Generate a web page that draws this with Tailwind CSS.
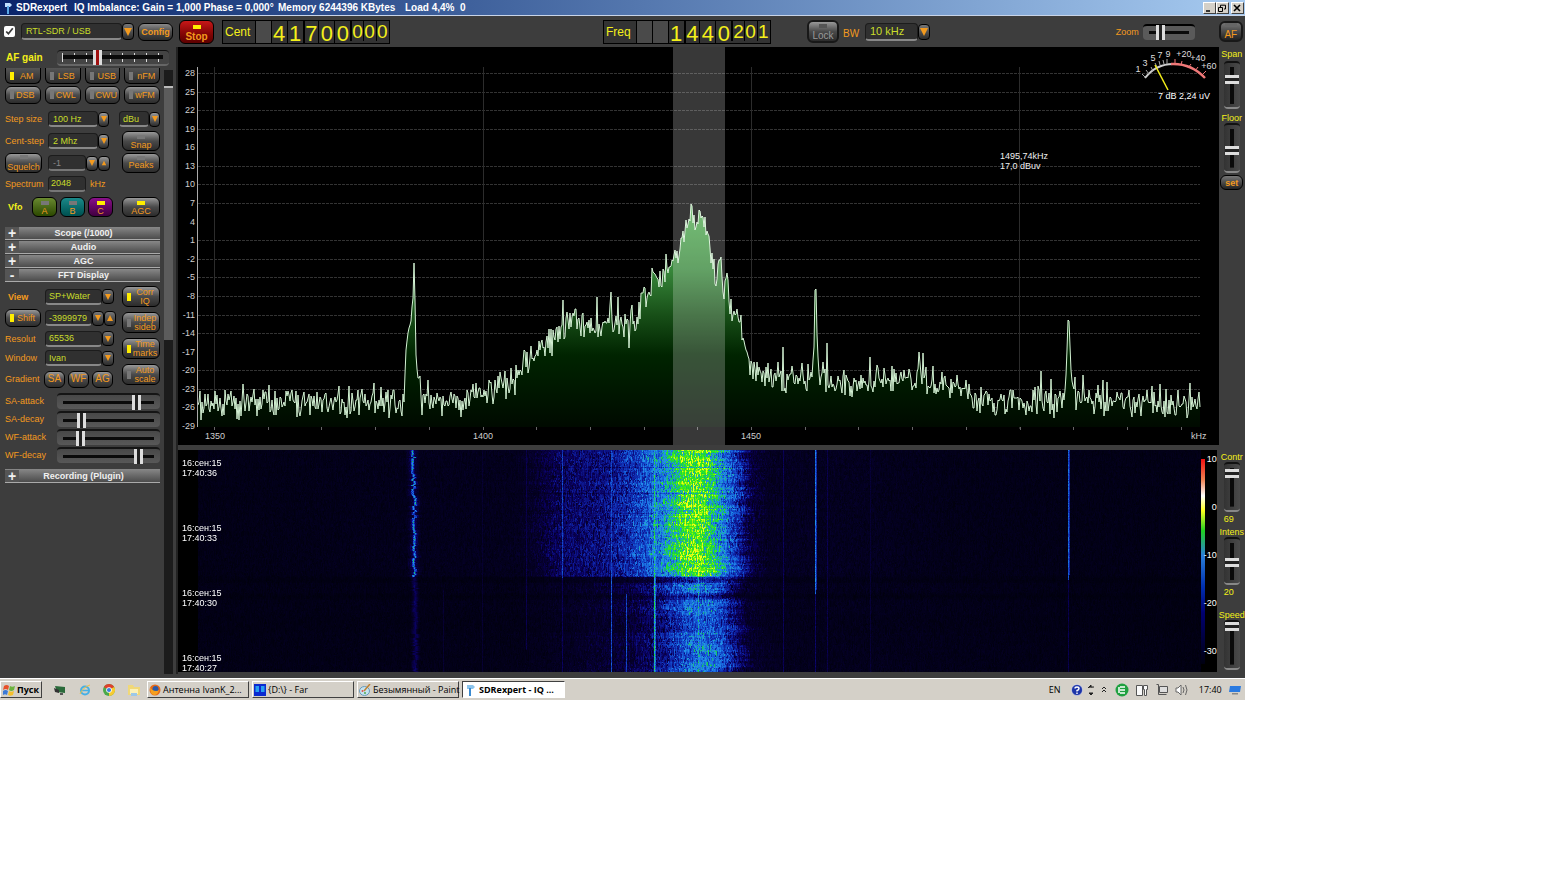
<!DOCTYPE html>
<html lang="en">
<head>
  <meta charset="UTF-8" />
  <meta name="viewport" content="width=device-width, initial-scale=1.0"/>
  <title>SDRexpert</title>
  <script src="https://cdn.jsdelivr.net/npm/@tailwindcss/browser@4"></script>
</head>
<body class="bg-white">
  <div class="w-4/5 overflow-hidden bg-[#3d3d3d] font-['Liberation_Sans',Arial,sans-serif] text-[9px] leading-[10px] text-[#f39a1e]">

    <!-- Title bar -->
    <header class="flex h-4 items-center whitespace-nowrap border-b border-[#c8d4e8] bg-linear-to-r from-[#0a246a] to-[#a6caf0] pl-1 pr-px text-[10px] font-bold text-white">
      <svg class="mr-1 h-3 w-2" viewBox="0 0 8 12"><path d="M1 1h5l2 2-2 2H1z" fill="#bfe0ff"/><path d="M3 4h2v8H3z" fill="#5aa9e6"/></svg>
      <span class="w-[58px]">SDRexpert</span>
      <span class="w-[204px]">IQ Imbalance: Gain = 1,000 Phase = 0,000°</span>
      <span class="w-[127px]">Memory 6244396 KBytes</span>
      <span>Load 4,4%&nbsp; 0</span>
      <div class="ml-auto flex h-3">
        <button aria-label="Minimize" class="flex w-[13px] items-center justify-center border border-[#404040] border-l-white border-t-white bg-[#d4d0c8]"><svg class="size-2" viewBox="0 0 8 8"><path d="M1 7h4" stroke="#000" stroke-width="1.5"/></svg></button>
        <button aria-label="Restore" class="flex w-[13px] items-center justify-center border border-[#404040] border-l-white border-t-white bg-[#d4d0c8]"><svg class="size-2" viewBox="0 0 8 8" fill="none" stroke="#000"><path d="M2.5 3V1.2h5V5H6M.5 3.5h4v4h-4z"/></svg></button>
        <button aria-label="Close" class="ml-0.5 flex w-[13px] items-center justify-center border border-[#404040] border-l-white border-t-white bg-[#d4d0c8]"><svg class="size-2" viewBox="0 0 8 8"><path d="M1 1l6 6M7 1L1 7" stroke="#000" stroke-width="1.6"/></svg></button>
      </div>
    </header>

    <!-- Toolbar -->
    <div class="flex h-[31px] items-center">
      <div class="flex w-[179px] items-center">
        <input type="checkbox" checked aria-label="Device on" class="ml-1 size-[11px] accent-white"/>
        <select aria-label="Device" class="ml-1.5 h-[17px] w-[101px] appearance-none rounded-sm border border-b-2 border-[#1c1c1c] border-b-[#888] bg-[#303030] pl-1 leading-3 text-[#c9dd2a]"><option>RTL-SDR / USB</option></select>
        <span class="flex h-[17px] w-3 items-center justify-center rounded-sm border border-black bg-linear-to-b from-[#777] to-[#2c2c2c]"><svg class="size-2" viewBox="0 0 8 8"><path d="M0 0h8L4 8z" fill="#f39a1e"/></svg></span>
        <button class="ml-1 h-[18px] w-[35px] rounded-md border border-black bg-linear-to-b from-[#8a8a8a] via-[#4a4a4a] to-[#2c2c2c] font-bold">Config</button>
      </div>
      <button class="flex h-6 w-[35px] flex-col items-center justify-between rounded-md border border-black bg-linear-to-b from-[#c81818] via-[#8c0808] to-[#5c0000] pt-1 pb-px text-[10px] font-bold"><span class="h-1 w-2 bg-[#ffee00]"></span>Stop</button>

      <!-- Centre frequency -->
      <div class="ml-2 flex h-[24px] w-[168px] border border-black bg-[#333] text-[22px] leading-[25px] text-[#f4f01a]">
        <span class="w-8 pl-0.5 text-xs leading-[22px]">Cent</span>
        <span class="w-4 border-l border-black bg-[#4a4a4a]"></span>
        <span class="w-4 border-l border-black text-center">4</span>
        <span class="w-4 border-l border-black text-center">1</span>
        <span class="w-4 border-l-2 border-black text-center">7</span>
        <span class="w-4 border-l border-black text-center">0</span>
        <span class="w-4 border-l border-black text-center">0</span>
        <span class="h-5 w-[13px] border-l-2 border-black text-[19px] leading-[22px]">0</span>
        <span class="h-5 w-[13px] border-l border-black text-[19px] leading-[22px]">0</span>
        <span class="h-5 w-[13px] border-l border-black text-[19px] leading-[22px]">0</span>
      </div>

      <!-- Tuned frequency -->
      <div class="ml-[213px] flex h-[24px] w-[168px] border border-black bg-[#333] text-[22px] leading-[25px] text-[#f4f01a]">
        <span class="w-8 pl-0.5 text-xs leading-[22px]">Freq</span>
        <span class="w-4 border-l border-black bg-[#4a4a4a]"></span>
        <span class="w-4 border-l border-black bg-[#4a4a4a]"></span>
        <span class="w-4 border-l border-black text-center">1</span>
        <span class="w-4 border-l-2 border-black text-center">4</span>
        <span class="w-4 border-l border-black text-center">4</span>
        <span class="w-4 border-l border-black text-center">0</span>
        <span class="h-5 w-[13px] border-l-2 border-black text-[19px] leading-[22px]">2</span>
        <span class="h-5 w-[13px] border-l border-black text-[19px] leading-[22px]">0</span>
        <span class="h-5 w-[13px] border-l border-black text-[19px] leading-[22px]">1</span>
      </div>

      <button class="ml-9 flex h-[23px] w-8 flex-col items-center justify-between rounded-md border-2 border-[#181818] bg-linear-to-b from-[#999] via-[#4a4a4a] to-[#2c2c2c] pt-0.5 text-[10px] text-[#999]"><span class="h-1 w-2 bg-[#555]"></span>Lock</button>
      <label for="bw" class="ml-1 w-[22px] pt-1 text-[10px]">BW</label>
      <select id="bw" class="h-[18px] w-[53px] appearance-none rounded-sm border border-b-2 border-[#1c1c1c] border-b-[#888] bg-[#303030] pl-1 text-[11px] leading-3 text-[#c9dd2a]"><option>10 kHz</option></select>
      <span class="flex h-4 w-3 items-center justify-center rounded-sm border border-black bg-linear-to-b from-[#777] to-[#2c2c2c]"><svg class="size-2" viewBox="0 0 8 8"><path d="M0 0h8L4 8z" fill="#f39a1e"/></svg></span>

      <label for="zoom" class="ml-auto">Zoom</label>
      <input id="zoom" type="range" value="26" class="ml-1 h-4 w-[52px] appearance-none rounded-sm border-t-2 border-black bg-[linear-gradient(#0a0a0a,#0a0a0a),linear-gradient(#5a5a5a,#5a5a5a)] bg-[length:40px_3px,100%_100%] bg-center bg-no-repeat px-1 [&::-webkit-slider-thumb]:h-[15px] [&::-webkit-slider-thumb]:w-[9px] [&::-webkit-slider-thumb]:appearance-none [&::-webkit-slider-thumb]:bg-[linear-gradient(to_right,#ddd_3px,#222_3px,#222_6px,#ddd_6px)]"/>
      <button class="ml-6 mr-0.5 flex h-[21px] w-6 flex-col items-center justify-between rounded-md border-2 border-[#181818] bg-linear-to-b from-[#777] via-[#4a4a4a] to-[#222] text-[10px]"><span class="h-1 w-3 bg-[#666]"></span>AF</button>
    </div>

    <div class="flex pb-1">
      <!-- Left controls -->
      <aside class="flex w-[178px] shrink-0 flex-col border-r-2 border-[#222]">
        <div class="flex h-[21px] items-center">
          <label for="afgain" class="w-[57px] pl-1.5 text-[10px] font-bold text-[#f4f01a]">AF gain</label>
          <input id="afgain" type="range" value="34" class="h-4 w-[112px] appearance-none rounded-sm border-t border-b-2 border-[#111] border-b-[#666] bg-[linear-gradient(#0a0a0a,#0a0a0a),repeating-linear-gradient(to_right,#ddd_0,#ddd_1px,transparent_1px,transparent_12px),linear-gradient(#444,#444)] bg-[length:100px_4px,102px_9px,100%_100%] bg-center bg-no-repeat px-1 [&::-webkit-slider-thumb]:h-[15px] [&::-webkit-slider-thumb]:w-[9px] [&::-webkit-slider-thumb]:appearance-none [&::-webkit-slider-thumb]:bg-[linear-gradient(to_right,#ddd_3px,#a01010_3px,#a01010_6px,#ddd_6px)]"/>
        </div>

        <div class="flex">
          <div class="flex w-[164px] flex-col pl-[5px] pr-1">
            <!-- Demodulator modes -->
            <div class="grid grid-cols-4 gap-x-1 gap-y-0.5">
              <button class="flex h-4 items-center gap-1.5 rounded-b-md border border-t-0 border-black bg-linear-to-b from-[#555] to-[#2c2c2c] pl-1"><span class="h-2 w-1 bg-[#ffee00]"></span>AM</button>
              <button class="flex h-4 items-center gap-1 rounded-b-md border border-t-0 border-black bg-linear-to-b from-[#555] to-[#2c2c2c] pl-1"><span class="h-2 w-1 bg-[#777]"></span>LSB</button>
              <button class="flex h-4 items-center gap-1 rounded-b-md border border-t-0 border-black bg-linear-to-b from-[#555] to-[#2c2c2c] pl-1"><span class="h-2 w-1 bg-[#777]"></span>USB</button>
              <button class="flex h-4 items-center gap-1 rounded-b-md border border-t-0 border-black bg-linear-to-b from-[#555] to-[#2c2c2c] pl-1"><span class="h-2 w-1 bg-[#777]"></span>nFM</button>
              <button class="flex h-[18px] items-center gap-0.5 rounded-md border border-black bg-linear-to-b from-[#999] via-[#4a4a4a] to-[#2c2c2c] pl-1"><span class="h-2 w-1 bg-[#777]"></span>DSB</button>
              <button class="flex h-[18px] items-center gap-0.5 rounded-md border border-black bg-linear-to-b from-[#999] via-[#4a4a4a] to-[#2c2c2c] pl-1"><span class="h-2 w-1 bg-[#777]"></span>CWL</button>
              <button class="flex h-[18px] items-center gap-0.5 rounded-md border border-black bg-linear-to-b from-[#999] via-[#4a4a4a] to-[#2c2c2c] pl-1"><span class="h-2 w-1 bg-[#777]"></span>CWU</button>
              <button class="flex h-[18px] items-center gap-0.5 rounded-md border border-black bg-linear-to-b from-[#999] via-[#4a4a4a] to-[#2c2c2c] pl-1"><span class="h-2 w-1 bg-[#777]"></span>wFM</button>
            </div>

            <div class="mt-1 flex h-[22px] items-center">
              <label for="step" class="w-[43px]">Step size</label>
              <select id="step" class="h-4 w-[50px] appearance-none rounded-sm border border-b-2 border-[#1c1c1c] border-b-[#888] bg-[#303030] pl-1 leading-3 text-[#c9dd2a]"><option>100 Hz</option></select>
              <span class="flex h-[15px] w-[11px] items-center justify-center rounded-sm border border-black bg-linear-to-b from-[#999] to-[#2c2c2c]"><svg class="size-1.5" viewBox="0 0 8 8"><path d="M0 0h8L4 8z" fill="#f39a1e"/></svg></span>
              <select aria-label="Units" class="ml-auto h-4 w-[30px] appearance-none rounded-sm border border-b-2 border-[#1c1c1c] border-b-[#888] bg-[#303030] pl-[3px] leading-3 text-[#c9dd2a]"><option>dBu</option></select>
              <span class="flex h-[15px] w-[11px] items-center justify-center rounded-sm border border-black bg-linear-to-b from-[#999] to-[#2c2c2c]"><svg class="size-1.5" viewBox="0 0 8 8"><path d="M0 0h8L4 8z" fill="#f39a1e"/></svg></span>
            </div>
            <div class="flex h-[22px] items-center">
              <label for="centstep" class="w-[43px]">Cent-step</label>
              <select id="centstep" class="h-4 w-[50px] appearance-none rounded-sm border border-b-2 border-[#1c1c1c] border-b-[#888] bg-[#303030] pl-1 leading-3 text-[#c9dd2a]"><option>2 Mhz</option></select>
              <span class="flex h-[15px] w-[11px] items-center justify-center rounded-sm border border-black bg-linear-to-b from-[#999] to-[#2c2c2c]"><svg class="size-1.5" viewBox="0 0 8 8"><path d="M0 0h8L4 8z" fill="#f39a1e"/></svg></span>
              <button class="ml-auto flex h-5 w-[38px] flex-col items-center justify-between rounded-md border border-black bg-linear-to-b from-[#999] via-[#4a4a4a] to-[#2c2c2c] pt-[3px]"><span class="h-1 w-2 shrink-0 bg-[#777]"></span>Snap</button>
            </div>
            <div class="flex h-[22px] items-center">
              <button class="mr-1.5 flex h-5 w-[37px] flex-col items-center justify-between rounded-md border border-black bg-linear-to-b from-[#999] via-[#4a4a4a] to-[#2c2c2c] pt-px"><span class="h-1 w-2 shrink-0 bg-[#777]"></span>Squelch</button>
              <input type="text" value="-1" aria-label="Squelch level" class="h-4 w-[38px] rounded-sm border border-b-2 border-[#1c1c1c] border-b-[#777] bg-[#303030] pl-1 text-[#888]"/>
              <button aria-label="Squelch down" class="flex h-[15px] w-3 items-center justify-center rounded-sm border border-black bg-linear-to-b from-[#999] to-[#2c2c2c]"><svg class="size-1.5" viewBox="0 0 8 8"><path d="M0 0h8L4 8z" fill="#f39a1e"/></svg></button>
              <button aria-label="Squelch up" class="flex h-[15px] w-3 items-center justify-center rounded-sm border border-black bg-linear-to-b from-[#999] to-[#2c2c2c]"><svg class="size-1.5" viewBox="0 0 8 8"><path d="M1 7h6L4 1z" fill="#f39a1e"/></svg></button>
              <button class="ml-auto flex h-5 w-[38px] flex-col items-center justify-between rounded-md border border-black bg-linear-to-b from-[#999] via-[#4a4a4a] to-[#2c2c2c] pt-0.5 pb-0.5"><span class="h-1 w-2 shrink-0 bg-[#777]"></span>Peaks</button>
            </div>
            <div class="flex h-[19px] items-center">
              <label for="spectrumw" class="w-[43px]">Spectrum</label>
              <input id="spectrumw" type="text" value="2048" class="h-4 w-[38px] rounded-sm border border-b-2 border-[#1c1c1c] border-b-[#777] bg-[#303030] pl-0.5 text-[#c9dd2a]"/>
              <span class="ml-1">kHz</span>
            </div>
            <div class="flex h-7 items-center font-bold">
              <span class="w-[27px] pl-[3px] text-[#f4f01a]">Vfo</span>
              <button class="flex h-5 w-[25px] flex-col items-center justify-between rounded-md border border-black bg-linear-to-b from-[#6a8a30] to-[#2c4800] pt-[3px] font-normal"><span class="h-1 w-2 shrink-0 bg-[#777]"></span>A</button>
              <button class="ml-[3px] flex h-5 w-[25px] flex-col items-center justify-between rounded-md border border-black bg-linear-to-b from-[#1a8a8a] to-[#005050] pt-[3px] font-normal"><span class="h-1 w-2 shrink-0 bg-[#777]"></span>B</button>
              <button class="ml-[3px] flex h-5 w-[25px] flex-col items-center justify-between rounded-md border border-black bg-linear-to-b from-[#8a108a] to-[#400040] pt-[3px] font-normal"><span class="h-1 w-2 shrink-0 bg-[#ffee00]"></span>C</button>
              <button class="ml-auto flex h-5 w-[38px] flex-col items-center justify-between rounded-md border border-black bg-linear-to-b from-[#999] via-[#4a4a4a] to-[#2c2c2c] pt-[3px] font-normal"><span class="h-1 w-2 shrink-0 bg-[#ffee00]"></span>AGC</button>
            </div>

            <!-- Collapsible sections -->
            <div class="mt-1.5 flex flex-col gap-px font-bold text-[#f0f0f0]">
              <button class="flex h-[13px] items-center border-b border-[#aaa] bg-linear-to-b from-[#888] to-[#4c4c4c]"><span class="w-[14px] bg-[#555] text-sm leading-3">+</span><span class="flex-1 pr-3">Scope (/1000)</span></button>
              <button class="flex h-[13px] items-center border-b border-[#aaa] bg-linear-to-b from-[#888] to-[#4c4c4c]"><span class="w-[14px] bg-[#555] text-sm leading-3">+</span><span class="flex-1 pr-3">Audio</span></button>
              <button class="flex h-[13px] items-center border-b border-[#aaa] bg-linear-to-b from-[#888] to-[#4c4c4c]"><span class="w-[14px] bg-[#555] text-sm leading-3">+</span><span class="flex-1 pr-3">AGC</span></button>
              <button class="flex h-[13px] items-center border-b border-[#aaa] bg-linear-to-b from-[#888] to-[#4c4c4c]"><span class="w-[14px] bg-[#555] text-sm leading-3">-</span><span class="flex-1 pr-3">FFT Display</span></button>
            </div>

            <!-- FFT display -->
            <div class="mt-1 flex justify-between">
              <div class="flex w-[111px] flex-col">
                <div class="flex h-[21px] items-center">
                  <label for="view" class="w-10 pl-[3px] font-bold">View</label>
                  <select id="view" class="h-4 w-[57px] appearance-none rounded-sm border border-b-2 border-[#1c1c1c] border-b-[#888] bg-[#303030] pl-[3px] leading-3 text-[#c9dd2a]"><option>SP+Water</option></select>
                  <span class="flex h-[15px] w-3 items-center justify-center rounded-sm border border-black bg-linear-to-b from-[#777] to-[#2c2c2c]"><svg class="size-1.5" viewBox="0 0 8 8"><path d="M0 0h8L4 8z" fill="#f39a1e"/></svg></span>
                </div>
                <div class="flex h-[22px] items-center">
                  <button class="mr-1 flex h-[18px] w-9 items-center gap-[3px] rounded-md border border-black bg-linear-to-b from-[#999] via-[#4a4a4a] to-[#2c2c2c] pl-1"><span class="h-2 w-1 bg-[#ffee00]"></span>Shift</button>
                  <input type="text" value="-3999979" aria-label="Shift frequency" class="h-4 w-[47px] rounded-sm border border-b-2 border-[#1c1c1c] border-b-[#888] bg-[#303030] pl-[3px] text-[#c9dd2a]"/>
                  <button aria-label="Shift down" class="flex h-[15px] w-3 items-center justify-center rounded-sm border border-black bg-linear-to-b from-[#777] to-[#2c2c2c]"><svg class="size-1.5" viewBox="0 0 8 8"><path d="M0 0h8L4 8z" fill="#f39a1e"/></svg></button>
                  <button aria-label="Shift up" class="flex h-[15px] w-3 items-center justify-center rounded-sm border border-black bg-linear-to-b from-[#777] to-[#2c2c2c]"><svg class="size-1.5" viewBox="0 0 8 8"><path d="M0 8h8L4 0z" fill="#f39a1e"/></svg></button>
                </div>
                <div class="flex h-[19px] items-center">
                  <label for="resolut" class="w-10">Resolut</label>
                  <select id="resolut" class="h-4 w-[57px] appearance-none rounded-sm border border-b-2 border-[#1c1c1c] border-b-[#888] bg-[#303030] pl-[3px] leading-3 text-[#c9dd2a]"><option>65536</option></select>
                  <span class="flex h-[15px] w-3 items-center justify-center rounded-sm border border-black bg-linear-to-b from-[#777] to-[#2c2c2c]"><svg class="size-1.5" viewBox="0 0 8 8"><path d="M0 0h8L4 8z" fill="#f39a1e"/></svg></span>
                </div>
                <div class="flex h-[20px] items-center">
                  <label for="window" class="w-10">Window</label>
                  <select id="window" class="h-4 w-[57px] appearance-none rounded-sm border border-b-2 border-[#1c1c1c] border-b-[#888] bg-[#303030] pl-[3px] leading-3 text-[#c9dd2a]"><option>Ivan</option></select>
                  <span class="flex h-[15px] w-3 items-center justify-center rounded-sm border border-black bg-linear-to-b from-[#777] to-[#2c2c2c]"><svg class="size-1.5" viewBox="0 0 8 8"><path d="M0 0h8L4 8z" fill="#f39a1e"/></svg></span>
                </div>
                <div class="flex h-[22px] items-center gap-[3px]">
                  <span class="w-9">Gradient</span>
                  <button class="h-[17px] w-[21px] rounded-md border border-black bg-linear-to-b from-[#999] via-[#4a4a4a] to-[#2c2c2c] text-[10px]">SA</button>
                  <button class="h-[17px] w-[21px] rounded-md border border-black bg-linear-to-b from-[#999] via-[#4a4a4a] to-[#2c2c2c] text-[10px]">WF</button>
                  <button class="h-[17px] w-[21px] rounded-md border border-black bg-linear-to-b from-[#999] via-[#4a4a4a] to-[#2c2c2c] text-[10px]">AG</button>
                </div>
              </div>
              <div class="flex w-[38px] flex-col gap-[5px] leading-[9px]">
                <button class="flex h-[21px] items-center rounded-md border border-black bg-linear-to-b from-[#999] via-[#4a4a4a] to-[#2c2c2c] pl-1"><span class="h-2 w-1 shrink-0 bg-[#ffee00]"></span><span class="flex-1">Corr<br/>IQ</span></button>
                <button class="flex h-[21px] items-center rounded-md border border-black bg-linear-to-b from-[#999] via-[#4a4a4a] to-[#2c2c2c] pl-1"><span class="h-2 w-1 shrink-0 bg-[#777]"></span><span class="flex-1">Indep<br/>sideb</span></button>
                <button class="flex h-[21px] items-center rounded-md border border-black bg-linear-to-b from-[#999] via-[#4a4a4a] to-[#2c2c2c] pl-1"><span class="h-2 w-1 shrink-0 bg-[#ffee00]"></span><span class="flex-1">Time<br/>marks</span></button>
                <button class="flex h-[21px] items-center rounded-md border border-black bg-linear-to-b from-[#999] via-[#4a4a4a] to-[#2c2c2c] pl-1"><span class="h-2 w-1 shrink-0 bg-[#777]"></span><span class="flex-1">Auto<br/>scale</span></button>
              </div>
            </div>

            <div class="mt-[3px] flex flex-col gap-0.5 [&_input]:h-4 [&_input]:w-[103px] [&_input]:appearance-none [&_input]:rounded-sm [&_input]:border-t-2 [&_input]:border-[#151515] [&_input]:bg-[linear-gradient(#0a0a0a,#0a0a0a),linear-gradient(#484848,#585858)] [&_input]:bg-[length:91px_3px,100%_100%] [&_input]:bg-center [&_input]:bg-no-repeat [&_input]:px-1 [&_::-webkit-slider-thumb]:h-[15px] [&_::-webkit-slider-thumb]:w-[9px] [&_::-webkit-slider-thumb]:appearance-none [&_::-webkit-slider-thumb]:bg-[linear-gradient(to_right,#ddd_3px,#222_3px,#222_6px,#ddd_6px)]">
              <div class="flex items-center justify-between"><label for="saa">SA-attack</label><input id="saa" type="range" value="83"/></div>
              <div class="flex items-center justify-between"><label for="sad">SA-decay</label><input id="sad" type="range" value="19"/></div>
              <div class="flex items-center justify-between"><label for="wfa">WF-attack</label><input id="wfa" type="range" value="17"/></div>
              <div class="flex items-center justify-between"><label for="wfd">WF-decay</label><input id="wfd" type="range" value="85"/></div>
            </div>
            <button class="mt-1.5 flex h-[14px] items-center border-b border-[#aaa] bg-linear-to-b from-[#888] to-[#4c4c4c] font-bold text-[#f0f0f0]"><span class="w-[14px] bg-[#555] text-sm leading-3">+</span><span class="flex-1 pr-3">Recording (Plugin)</span></button>
          </div>

          <!-- Scroll bar -->
          <div class="mt-0.5 h-[604px] w-[9px] bg-[#1c1c1c] pt-4"><div class="h-[254px] border-t-2 border-[#bbb] bg-[#5c5c5c]"></div></div>
        </div>
      </aside>

      <!-- Spectrum and waterfall -->
      <main class="min-w-0 flex-1">
        <svg id="spectrum" class="block h-[398px] w-full bg-black" font-family="Liberation Sans" font-size="9" fill="#cfcfcf">
          <defs>
            <linearGradient id="green" gradientUnits="userSpaceOnUse" x1="0" y1="155" x2="0" y2="380">
              <stop offset="0" stop-color="#52b052"/><stop offset=".3" stop-color="#37873a"/><stop offset=".5" stop-color="#185018"/><stop offset=".68" stop-color="#002400"/><stop offset="1" stop-color="#000a00"/>
            </linearGradient>
          </defs>
          <g id="grid"></g>
          <path id="area" fill="url(#green)"/>
          <path id="trace" fill="none" stroke="#d4f2d4" stroke-width="1"/>
          <rect x="495" y="0" width="52" height="398" fill="#fff" fill-opacity=".22"/>
          <path d="M19.500 20V380" stroke="#aaa"/>
          <text x="27" y="392">1350</text><text x="295" y="392">1400</text><text x="563" y="392">1450</text><text x="1013" y="392">kHz</text>
          <g fill="#f0f0f0"><text x="822" y="112">1495,74kHz</text><text x="822" y="122">17,0 dBuv</text></g>

          <!-- S-meter -->
          <g fill="none">
            <path d="M967 31Q978 17 995 17" stroke="#ccc" stroke-width="2"/>
            <path d="M993 17Q1013 16 1027 31" stroke="#f07878" stroke-width="2.500"/>
            <path d="M964 27l3 3M968 23l3 4M973 20l2 4M977 16l2 4M981 14l1 4M985 13l1 4M989 12v5" stroke="#aaa"/>
            <path d="M997 12v5M1004 14l-1 4M1013 17l-3 4M1020 20l-3 4M1028 24l-4 4" stroke="#f07878"/>
            <path d="M977 18L990 43" stroke="#f4f01a" stroke-width="1.500"/>
          </g>
          <g text-anchor="middle" fill="#ddd">
            <text x="960" y="25">1</text><text x="967" y="19">3</text><text x="975" y="14">5</text><text x="982" y="11">7</text><text x="990" y="10">9</text>
            <text x="1006" y="10">+20</text><text x="1020" y="14">+40</text><text x="1031" y="22">+60</text>
            <text x="1006" y="52" fill="#fff">7 dB 2,24 uV</text>
          </g>
        </svg>

        <div class="relative mt-[5px] mr-0.5 h-[222px] overflow-hidden bg-black text-white">
          <canvas id="waterfall" width="1023" height="222" class="block max-w-none"></canvas>
          <div class="absolute left-1 top-2 flex flex-col gap-[45px]">
            <p>16:сен:15<br/>17:40:36</p>
            <p>16:сен:15<br/>17:40:33</p>
            <p>16:сен:15<br/>17:40:30</p>
            <p>16:сен:15<br/>17:40:27</p>
          </div>
          <div class="absolute right-0 top-0 flex h-full w-4 bg-black pt-[9px]">
            <div class="h-[205px] w-1 bg-[linear-gradient(#f01010,#f08050_10%,#fff_18%,#ffff20_25%,#20d020_35%,#2a80d8_47%,#0030b0_62%,#000070_75%,#000010)]"></div>
          </div>
          <div class="absolute right-0 top-1 flex flex-col gap-[38px] text-right">
            <span>10</span><span>0</span><span>-10</span><span>-20</span><span>-30</span>
          </div>
        </div>
      </main>

      <!-- Right controls -->
      <aside class="flex w-[26px] shrink-0 flex-col items-center pt-0.5 text-[#f4f01a] [&_input]:w-4 [&_input]:appearance-none [&_input]:rounded-sm [&_input]:border-t-2 [&_input]:border-b-2 [&_input]:border-[#111] [&_input]:border-b-[#888] [&_input]:bg-[linear-gradient(#0a0a0a,#0a0a0a),linear-gradient(to_right,#333,#4a4a4a)] [&_input]:bg-[length:4px_84%,100%_100%] [&_input]:bg-center [&_input]:bg-no-repeat [&_input]:[direction:rtl] [&_input]:[writing-mode:vertical-lr] [&_::-webkit-slider-thumb]:h-[9px] [&_::-webkit-slider-thumb]:w-[14px] [&_::-webkit-slider-thumb]:appearance-none [&_::-webkit-slider-thumb]:bg-[linear-gradient(#ddd_3px,#222_3px,#222_6px,#ddd_6px)]">
        <label for="span">Span</label>
        <input id="span" type="range" value="66" class="mt-0.5 h-12"/>
        <label for="floor" class="mt-1">Floor</label>
        <input id="floor" type="range" value="43" class="h-[50px]"/>
        <button class="mt-0.5 h-[15px] w-[23px] rounded-md border border-black bg-linear-to-b from-[#777] to-[#222] font-bold text-[#f39a1e]">set</button>
        <label for="contr" class="mt-[262px]">Contr</label>
        <input id="contr" type="range" value="86" class="h-[50px]"/>
        <output class="mr-1.5 mt-0.5">69</output>
        <label for="intens" class="mt-[3px]">Intens</label>
        <input id="intens" type="range" value="46" class="h-12"/>
        <output class="mr-1.5 mt-0.5">20</output>
        <label for="speed" class="mt-[13px]">Speed</label>
        <input id="speed" type="range" value="100" class="h-[50px]"/>
      </aside>
    </div>

    <!-- Taskbar -->
    <footer class="flex h-[22px] items-center border-t border-white bg-[#d4d0c8] font-['Open_Sans',sans-serif] text-[9px] leading-3 text-black">
      <button class="flex h-[17px] w-[42px] items-center gap-0.5 border border-[#404040] border-l-white border-t-white pl-0.5 font-bold">
        <svg class="size-3" viewBox="0 0 12 12"><path d="M1 2q2.500-2 5 0L5 6Q3 4 0 6z" fill="#e8502a"/><path d="M7 2q2 1.500 5 0l-1 4q-3 2-5 0z" fill="#6cb33e"/><path d="M0 7q2.500-2 5 0l-1 4q-2-1.500-4 0z" fill="#3c7ad6"/><path d="M6 7q2 1.500 5 0l-1 4q-3 1.500-5 0z" fill="#f5c02c"/></svg>Пуск
      </button>
      <div class="ml-3 flex w-[86px] justify-between">
        <svg class="size-3" viewBox="0 0 12 12"><path d="M1 2l10 1v6l-8-1z" fill="#2a6a3a"/><path d="M0 4l5 2v3l-4-1z" fill="#333"/><path d="M6 9l3 0v2H6z" fill="#555"/></svg>
        <svg class="size-3" viewBox="0 0 12 12" fill="none"><circle cx="6" cy="6.500" r="4" stroke="#45b0e6" stroke-width="2"/><path d="M3 6.500h7" stroke="#45b0e6" stroke-width="1.500"/><path d="M1 10Q4 3 11 1" stroke="#f0c040"/></svg>
        <svg class="size-3" viewBox="0 0 12 12"><circle cx="6" cy="6" r="6" fill="#4aa84a"/><path d="M6 6L.8 3A6 6 0 0 1 11.200 3z" fill="#e0402c"/><path d="M6 6l5.200-3A6 6 0 0 1 6 12z" fill="#f7cb30"/><circle cx="6" cy="6" r="2.800" fill="#fff"/><circle cx="6" cy="6" r="2.100" fill="#3b7de0"/></svg>
        <svg class="size-3" viewBox="0 0 12 12"><path d="M0 1h5l1 2h6v8H0z" fill="#f0d878"/><path d="M2 5h8v5H2z" fill="#fbf1b8"/><path d="M3 9h6v3H3z" fill="#9cc8e8"/></svg>
      </div>
      <div class="flex gap-[3px] whitespace-nowrap pl-[7px]">
        <button class="flex h-[17px] w-[102px] items-center gap-0.5 border border-[#404040] border-l-white border-t-white pl-px"><svg class="size-3 shrink-0" viewBox="0 0 12 12"><circle cx="6" cy="6" r="5.500" fill="#e66a1a"/><circle cx="6.500" cy="5" r="3" fill="#2a5aa8"/><path d="M1 3q2 4 6 4 2 0 3-1-1 5-5 5-4-1-4-8z" fill="#f6a01e"/></svg>Антенна IvanK_2...</button>
        <button class="flex h-[17px] w-[102px] items-center gap-0.5 border border-[#404040] border-l-white border-t-white pl-px"><svg class="size-3 shrink-0" viewBox="0 0 12 12"><path d="M0 0h12v12H0z" fill="#0a2ad0"/><path d="M1.500 2h3.500v6H1.500zM7 2h3.500v6H7z" fill="#28a0f0"/></svg>{D:\} - Far</button>
        <button class="flex h-[17px] w-[102px] items-center gap-0.5 border border-[#404040] border-l-white border-t-white pl-px"><svg class="size-3 shrink-0" viewBox="0 0 12 12"><ellipse cx="5.500" cy="7" rx="5" ry="4.500" fill="#c4e2f0" stroke="#6a9ab8"/><circle cx="3.500" cy="7" r="1" fill="#e05050"/><circle cx="6" cy="9" r="1" fill="#50a850"/><path d="M5 7l6-7" stroke="#c08030" stroke-width="1.500"/></svg>Безымянный - Paint</button>
        <button class="flex h-[17px] w-[103px] items-center gap-0.5 border border-white border-l-[#404040] border-t-[#404040] bg-white pl-0.5 font-bold"><svg class="size-3 shrink-0" viewBox="0 0 12 12"><path d="M2 1h6l2 2-2 2H2z" fill="#8cc4ec"/><path d="M4 4h2v8H4z" fill="#3a8ad0"/></svg>SDRexpert - IQ ...</button>
      </div>
      <div class="ml-auto flex items-center pr-1">
        <span class="w-5">EN</span>
        <svg class="ml-0.5 size-3" viewBox="0 0 12 12"><circle cx="6" cy="6" r="5.500" fill="#1c34a8" stroke="#fff" stroke-width=".5"/><path d="M4 4.500Q4 3 6 3t2 1.500Q8 6 6 6.500V7.500M6 8.500V10" stroke="#fff" stroke-width="1.400" fill="none"/></svg>
        <svg class="ml-1 h-3 w-2" viewBox="0 0 8 12"><path d="M1 4l3-3v2h3M2 9h4l-2 2z" fill="#222" stroke="#222"/></svg>
        <svg class="ml-1.5 h-3 w-1.5" viewBox="0 0 6 12" fill="none" stroke="#222"><path d="M1 5l2-2 2 2M1 8l2-2 2 2"/></svg>
        <svg class="ml-2 size-[14px]" viewBox="0 0 14 14"><circle cx="7" cy="7" r="6.500" fill="#1fa040"/><path d="M5 4h5M5 7h5M5 10h5M4 4v6" stroke="#fff" stroke-width="1.500"/></svg>
        <svg class="ml-1.5 size-[14px]" viewBox="0 0 14 14" fill="#fafafa" stroke="#555"><path d="M1.500 2.500h6v10h-6z"/><path d="M8.500 2.500h4v4h-1v6h-2v-6h-1z"/></svg>
        <svg class="ml-1.5 size-[14px]" viewBox="0 0 14 14" fill="#ddd" stroke="#555"><path d="M4.500 3.500h8v6h-8z"/><path d="M1.500 1.500h2v10h8" fill="none"/></svg>
        <svg class="ml-1.5 size-[14px]" viewBox="0 0 14 14" fill="#fff" stroke="#666"><path d="M1 5h2l3-3v10L3 9H1z"/><path d="M8 4q2 3 0 6M10.500 2q3 5 0 10" fill="none"/></svg>
        <time class="ml-2.5 w-[30px]">17:40</time>
        <svg class="h-[10px] w-3" viewBox="0 0 12 10"><path d="M1 1h11l-1 6H0z" fill="#2a7ae0"/><path d="M3 8h6v1.500H3z" fill="#888"/></svg>
      </div>
    </footer>
  </div>

  <script>
    // seeded noise so every load draws the same band
    let seed = 7;
    function rnd() {
      seed = (seed * 1664525 + 1013904223) >>> 0;
      return seed / 4294967296;
    }
    function interp(points, x) {
      for (let i = 1; i < points.length; i++) {
        if (x <= points[i][0]) {
          const [x0, y0] = points[i - 1], [x1, y1] = points[i];
          return y0 + (y1 - y0) * (x - x0) / (x1 - x0);
        }
      }
      return points[points.length - 1][1];
    }

    // Grid and dB labels
    let grid = '';
    for (let i = 0; i < 20; i++) {
      const db = 28 - i * 3, y = Math.round(26 + i * 18.58);
      grid += `<text x="17" y="${y + 3}" text-anchor="end">${db}</text>`;
      if (![4, 8, 15, 19].includes(i)) grid += `<path d="M20 ${y + 0.5}H1022" stroke="#333" stroke-dasharray="3 1"/>`;
    }
    [36, 305, 573, 841].forEach(x => grid += `<path d="M${x + 0.5} 20V382" stroke="#2c2c2c"/>`);
    for (let i = 0; i < 19; i++) grid += `<path d="M${Math.round(36 + i * 53.7) + 0.5} 380v3" stroke="#666"/>`;
    document.getElementById('grid').innerHTML = grid;

    // Spectrum envelope: x, y
    const env = [[20,355],[223,355],[226,348],[228,305],[230,285],[233,275],[235,250],[236,217],[237,255],[238,310],[240,332],[243,350],[260,355],[283,353],[302,345],[322,340],[337,334],[343,318],[358,307],[372,296],[382,288],[390,274],[422,280],[434,272],[447,280],[462,262],[472,240],[482,228],[492,219],[500,208],[506,188],[511,168],[514,166],[518,181],[522,168],[528,178],[532,198],[538,238],[541,215],[543,206],[545,255],[548,232],[552,258],[560,268],[567,298],[573,325],[582,330],[602,332],[634,330],[636,300],[637,242],[638,240],[639,288],[641,330],[660,338],[690,336],[722,332],[745,330],[762,338],[780,345],[800,352],[840,356],[886,354],[888,330],[890,274],[891,276],[892,298],[894,345],[910,354],[1022,356]];
    const spikes = {385:253, 419:250, 433:245, 451:301, 605:300, 624:316, 649:296, 692:310, 745:306, 863:324, 905:328, 929:335, 982:337, 513:157, 522:164};
    const pts = [];
    for (let x = 20; x <= 1022; x++) {
      const n = rnd() + rnd() - 1;
      const sharp = (x > 227 && x < 240) || (x > 634 && x < 641) || (x > 887 && x < 894);
      let y = interp(env, x) + n * (sharp ? 3 : x > 490 && x < 570 ? 15 : 19);
      if (!sharp && rnd() > 0.94) y -= 13 * rnd();
      if (spikes[x]) y = spikes[x];
      pts.push(x + ' ' + Math.round(y));
    }
    document.getElementById('trace').setAttribute('d', 'M' + pts.join('L'));
    document.getElementById('area').setAttribute('d', 'M20 380L' + pts.join('L') + 'L1022 380Z');

    // Waterfall
    const canvas = document.getElementById('waterfall');
    const ctx = canvas.getContext('2d');
    const W = canvas.width, H = canvas.height;
    const img = ctx.createImageData(W, H);
    const red = [[0,0],[.45,20],[.55,36],[.65,20],[.72,60],[.82,240],[1,255]];
    const grn = [[0,0],[.2,0],[.35,40],[.55,140],[.68,225],[.82,255],[1,255]];
    const blu = [[0,10],[.12,44],[.3,150],[.45,215],[.56,235],[.66,60],[.75,10],[.9,30],[1,160]];
    const upper = [[20,.04],[340,.07],[362,.13],[380,.2],[430,.27],[455,.38],[472,.48],[488,.57],[500,.68],[511,.75],[522,.76],[532,.68],[542,.58],[550,.48],[560,.36],[572,.16],[590,.09],[700,.07],[780,.05],[1022,.04]];
    const lower = [[20,.04],[340,.05],[400,.1],[450,.15],[477,.24],[490,.34],[502,.44],[520,.52],[535,.5],[545,.42],[556,.27],[570,.12],[600,.07],[1022,.03]];
    const lines = [
      [384,.42,0,128],[384,.2,128,222],[433,.44,0,222],[448,.42,144,222],[476,.66,0,222],[477,.5,0,222],[520,.6,128,222],
      [605,.2,0,222],[637,.52,0,144],[638,.35,0,140],[637,.22,144,222],[649,.18,0,222],[890,.48,0,130],[891,.35,0,125],[890,.18,130,222],
      [304,.13,0,222],[348,.18,0,200],[692,.14,0,222],[265,.13,140,222]
    ];
    const up = [], low = [], held = [];
    for (let x = 0; x < W; x++) { up.push(interp(upper, x)); low.push(interp(lower, x)); held.push(0); }
    let shift = 0, carrier = 0;
    for (let y = 0; y < H; y++) {
      const top = y < 127;
      shift = shift * 0.8 + (rnd() - 0.5) * 8;
      if (rnd() > 0.6) carrier = Math.floor(rnd() * 3) - 1;
      let gain = 0.97 + (rnd() - 0.5) * 0.1;
      if (y > 125 && y < 133) gain = 0.6 + Math.abs(y - 130) * 0.05;
      if (y > 142 && y < 150) gain = 0.55 + Math.abs(y - 146) * 0.08;
      if (y > 164 && y < 182) gain = 0.85;
      if (y === 17 || y === 43) gain = 0.8;
      for (let x = 20; x < W; x++) {
        if (rnd() > 0.45) held[x] = rnd() + rnd() - 1;
        const sx = Math.max(20, Math.min(W - 1, Math.round(x + shift)));
        const b = (top ? up[sx] : low[sx]) * gain;
        let v = b + held[x] * Math.min(0.17, b * 0.55 + 0.01);
        // drifting carrier
        const d = Math.abs(x - 235 - carrier - Math.round(y / 90));
        if (d < 7) v += top ? [.5, .36, .14, .1, .07, .05, .03][d] * (0.6 + rnd() * 0.6) : [.15, .13, .09, .05, .02, 0, 0][d];
        for (const [lx, lv, y0, y1] of lines) if (lx === x && y >= y0 && y < y1) v = Math.max(v, lv * (0.8 + rnd() * 0.3));
        v = Math.max(0, Math.min(1, v));
        const i = (y * W + x) * 4;
        img.data[i] = interp(red, v);
        img.data[i + 1] = interp(grn, v);
        img.data[i + 2] = interp(blu, v);
        img.data[i + 3] = 255;
      }
    }
    ctx.putImageData(img, 0, 0);
  </script>
</body>
</html>
